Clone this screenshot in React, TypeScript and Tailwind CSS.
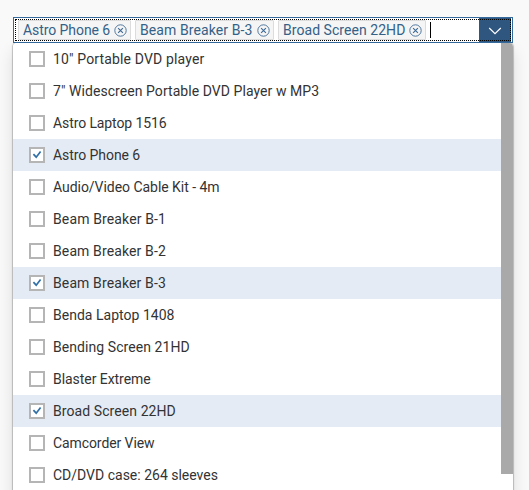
const items = [
  { label: '10" Portable DVD player', track: 'tracking-[0.15px]' },
  { label: '7" Widescreen Portable DVD Player w MP3', track: 'tracking-[0.06px]' },
  { label: 'Astro Laptop 1516', track: 'tracking-[-0.1px]' },
  { label: 'Astro Phone 6', checked: true, track: 'tracking-[-0.07px]' },
  { label: 'Audio/Video Cable Kit - 4m', track: 'tracking-[-0.04px]' },
  { label: 'Beam Breaker B-1', track: 'tracking-[0.13px]' },
  { label: 'Beam Breaker B-2', track: 'tracking-[0.12px]' },
  { label: 'Beam Breaker B-3', checked: true, track: 'tracking-[0.12px]' },
  { label: 'Benda Laptop 1408', track: 'tracking-[0.02px]' },
  { label: 'Bending Screen 21HD', track: 'tracking-[0.07px]' },
  { label: 'Blaster Extreme', track: 'tracking-[-0.05px]' },
  { label: 'Broad Screen 22HD', checked: true, track: 'tracking-[0.08px]' },
  { label: 'Camcorder View', track: 'tracking-[-0.09px]' },
  { label: 'CD/DVD case: 264 sleeves', track: 'tracking-[0px]' },
];

const tokens = [
  { label: 'Astro Phone 6', width: 'w-[113px]', track: 'tracking-[-0.07px]' },
  { label: 'Beam Breaker B-3', width: 'w-[139px]', track: 'tracking-[0.1px]' },
  { label: 'Broad Screen 22HD', width: 'w-[148px]', track: 'tracking-[0.05px]' },
];

function RemoveIcon() {
  return (
    <svg className="h-[13px] w-[13px] shrink-0" viewBox="0 0 13 13" fill="none" stroke="#3d6a95">
      <circle cx="6.5" cy="6.5" r="5.7" strokeWidth="0.9" />
      <path d="M4.1 4.1l4.8 4.8M8.9 4.1l-4.8 4.8" strokeWidth="1.1" />
    </svg>
  );
}

function Checkbox({ checked }: { checked?: boolean }) {
  return (
    <span className="flex h-4 w-4 shrink-0 items-center justify-center border-2 border-[#b5b5b5] bg-white">
      {checked && (
        <svg className="h-3 w-3 shrink-0" viewBox="0 0 12 12" fill="none" stroke="#316fa8" strokeWidth="1.7">
          <path d="M2.4 5.2L5.2 8.2L9.6 2.4" />
        </svg>
      )}
    </span>
  );
}

export default function App() {
  return (
    <div className="h-[490px] w-[529px] overflow-hidden bg-[#f9f9f9] pt-[17px] pl-[13px] font-['Roboto',sans-serif] text-sm">
      <div className="relative z-10 flex h-[26px] w-[500px] border border-[#346a9b] bg-white">
        <div className="flex flex-1 items-center gap-1 pl-1">
          {tokens.map((t) => (
            <div key={t.label} className={`flex h-5 shrink-0 items-center justify-between rounded-[1px] border border-[#dcdcdc] bg-[#f5f5f5] pr-[3px] pl-1 text-[#346187] ${t.width}`}>
              <span className={`whitespace-nowrap ${t.track}`}>{t.label}</span>
              <RemoveIcon />
            </div>
          ))}
          <span className="h-4 w-px bg-black" />
        </div>
        <button className="mr-px flex h-6 w-8 items-center justify-center bg-[#2f567f]">
          <svg className="mt-0.5 h-2 w-3.5" viewBox="0 0 14 8" fill="none" stroke="#fff" strokeWidth="1.2">
            <path d="M1.2 1L7 6.6L12.8 1" />
          </svg>
        </button>
        <div className="pointer-events-none absolute inset-px border border-dotted border-black" />
      </div>
      <div className="flex h-[460px] w-[500px] overflow-hidden rounded-t bg-white shadow-[0_0_1px_1px_rgba(0,0,0,0.22),0_8px_16px_rgba(0,0,0,0.12)]">
        <ul className="flex-1">
          {items.map((item) => (
            <li key={item.label} className={`flex h-8 items-center gap-2 pl-4 text-[#333] ${item.checked ? 'bg-[#e5ebf5]' : 'bg-white'}`}>
              <Checkbox checked={item.checked} />
              <span className={`whitespace-nowrap ${item.track}`}>{item.label}</span>
            </li>
          ))}
        </ul>
        <div className="h-[431px] w-3 bg-[#a9a9a9]" />
      </div>
    </div>
  );
}
